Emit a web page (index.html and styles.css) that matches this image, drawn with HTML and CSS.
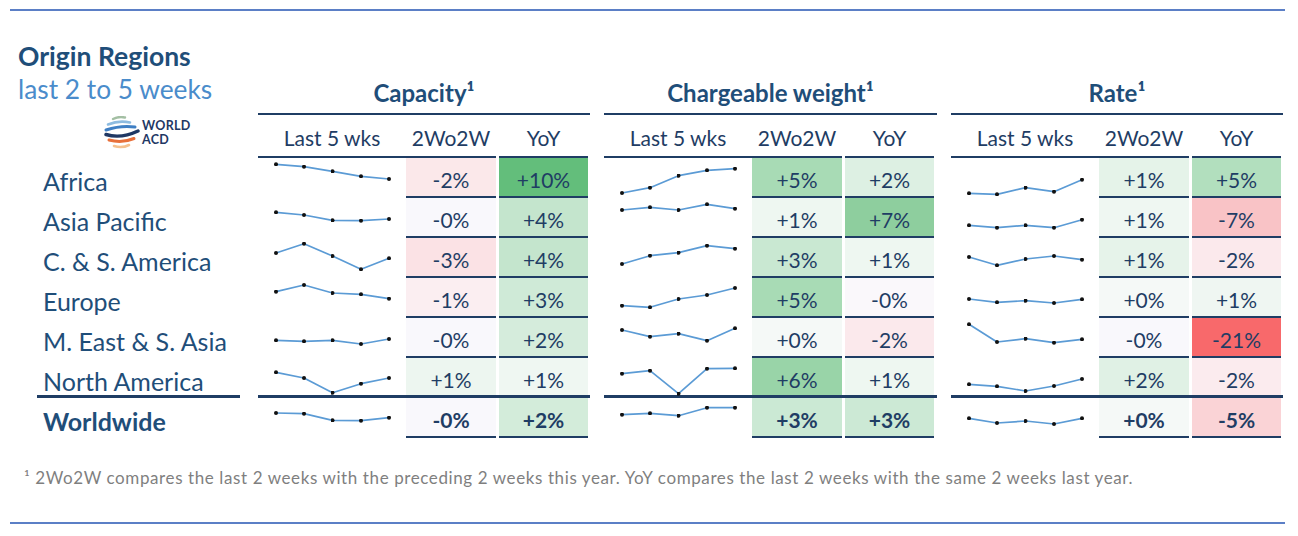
FILE: index.html
```html
<!DOCTYPE html>
<html lang="en">
<head>
<meta charset="utf-8">
<title>Origin Regions</title>
<link rel="stylesheet" href="styles.css">
</head>
<body>
<svg class="defs" width="0" height="0" aria-hidden="true">
  <defs>
    <marker id="dot" viewBox="0 0 4 4" refX="2" refY="2" markerWidth="4" markerHeight="4" markerUnits="userSpaceOnUse">
      <circle cx="2" cy="2" r="2" fill="#111"/>
    </marker>
  </defs>
</svg>
<div class="page">
  <div class="rule"></div>
  <div class="board">
    <div class="side">
      <div class="side-head">
        <div class="title">Origin Regions</div>
        <div class="subtitle">last 2 to 5 weeks</div>
        <div class="logo">
          <svg class="logo-mark" width="36" height="34" viewBox="0 0 36 34">
            <path d="M9,3 Q15,0 21,1.5" stroke="#a3bfa3" stroke-width="2.4" fill="none" stroke-linecap="round"/>
            <path d="M4,8.5 Q15,4 26,6.5" stroke="#8dbbe0" stroke-width="2.6" fill="none" stroke-linecap="round"/>
            <path d="M2,14 Q17,9 31,11" stroke="#3f7fc4" stroke-width="3" fill="none" stroke-linecap="round"/>
            <path d="M2,18.5 Q17,23 34,15" stroke="#1f3864" stroke-width="3.4" fill="none" stroke-linecap="round"/>
            <path d="M5,24 Q18,27.5 30,22.5" stroke="#e8703a" stroke-width="3" fill="none" stroke-linecap="round"/>
            <path d="M10,30 Q18,32.5 25,29" stroke="#f5c18f" stroke-width="2.6" fill="none" stroke-linecap="round"/>
          </svg>
          <div class="logo-text"><span>WORLD</span><span>ACD</span></div>
        </div>
      </div>
      <div class="labels">
        <div class="label">Africa</div>
        <div class="label">Asia Pacific</div>
        <div class="label">C. &amp; S. America</div>
        <div class="label">Europe</div>
        <div class="label">M. East &amp; S. Asia</div>
        <div class="label label-last">North America</div>
        <div class="label label-total">Worldwide</div>
      </div>
    </div>

    <section class="metric">
      <div class="metric-title">Capacity¹</div>
      <div class="colheads"><div class="ch ch-spark">Last 5 wks</div><div class="ch ch-w">2Wo2W</div><div class="ch ch-y">YoY</div></div>
      <div class="row"><div class="spark"><svg class="spk" viewBox="0 0 148 40"><polyline points="18,6.3 46,8.7 74.5,13.3 103,18.3 131,21"/></svg></div><div class="cell" style="background:#fbe8ea">-2%</div><div class="cell cell-y" style="background:#63be7b">+10%</div></div>
      <div class="row"><div class="spark"><svg class="spk" viewBox="0 0 148 40"><polyline points="18,14.3 46,17 74.5,22.3 103,22.7 131,21"/></svg></div><div class="cell" style="background:#f9f8fc">-0%</div><div class="cell cell-y" style="background:#c4e5cd">+4%</div></div>
      <div class="row"><div class="spark"><svg class="spk" viewBox="0 0 148 40"><polyline points="18,15 46,5.7 74.5,18 103,31.3 131,20.3"/></svg></div><div class="cell" style="background:#fbe2e5">-3%</div><div class="cell cell-y" style="background:#c4e5cd">+4%</div></div>
      <div class="row"><div class="spark"><svg class="spk" viewBox="0 0 148 40"><polyline points="18,13.7 46,7 74.5,15 103,16.3 131,20.7"/></svg></div><div class="cell" style="background:#fbeef1">-1%</div><div class="cell cell-y" style="background:#cfead7">+3%</div></div>
      <div class="row"><div class="spark"><svg class="spk" viewBox="0 0 148 40"><polyline points="18,22.3 46,23.3 74.5,22.3 103,26 131,21"/></svg></div><div class="cell" style="background:#f9f8fc">-0%</div><div class="cell cell-y" style="background:#d5ecdc">+2%</div></div>
      <div class="row row-last"><div class="spark"><svg class="spk" viewBox="0 0 148 40"><polyline points="18,14.3 46,20 74.5,34.7 103,25.7 131,20"/></svg></div><div class="cell" style="background:#edf6f0">+1%</div><div class="cell cell-y" style="background:#eff7f2">+1%</div></div>
      <div class="row row-total"><div class="spark"><svg class="spk" viewBox="0 0 148 40"><polyline points="18,15 46,15.7 74.5,22.3 103,22.7 131,19.7"/></svg></div><div class="cell" style="background:#f9f8fc">-0%</div><div class="cell cell-y" style="background:#d3ecda">+2%</div></div>
    </section>

    <section class="metric">
      <div class="metric-title">Chargeable weight¹</div>
      <div class="colheads"><div class="ch ch-spark">Last 5 wks</div><div class="ch ch-w">2Wo2W</div><div class="ch ch-y">YoY</div></div>
      <div class="row"><div class="spark"><svg class="spk" viewBox="0 0 148 40"><polyline points="18,35 46,29.7 74.5,17.7 103,12.3 131,10.7"/></svg></div><div class="cell" style="background:#a8dbb5">+5%</div><div class="cell cell-y" style="background:#ddf0e3">+2%</div></div>
      <div class="row"><div class="spark"><svg class="spk" viewBox="0 0 148 40"><polyline points="18,12 46,9.3 74.5,12 103,6.3 131,10.7"/></svg></div><div class="cell" style="background:#eef7f1">+1%</div><div class="cell cell-y" style="background:#8ece9e">+7%</div></div>
      <div class="row"><div class="spark"><svg class="spk" viewBox="0 0 148 40"><polyline points="18,26 46,17.7 74.5,14.7 103,7.7 131,10.7"/></svg></div><div class="cell" style="background:#c9e8d2">+3%</div><div class="cell cell-y" style="background:#eef7f1">+1%</div></div>
      <div class="row"><div class="spark"><svg class="spk" viewBox="0 0 148 40"><polyline points="18,27.7 46,29.3 74.5,21 103,17 131,10"/></svg></div><div class="cell" style="background:#a8dbb5">+5%</div><div class="cell cell-y" style="background:#faf8fb">-0%</div></div>
      <div class="row"><div class="spark"><svg class="spk" viewBox="0 0 148 40"><polyline points="18,12 46,18.7 74.5,15.7 103,22.7 131,10.3"/></svg></div><div class="cell" style="background:#f5f9f7">+0%</div><div class="cell cell-y" style="background:#fbe9ec">-2%</div></div>
      <div class="row row-last"><div class="spark"><svg class="spk" viewBox="0 0 148 40"><polyline points="18,15.7 46,12.7 74.5,35.7 103,10.7 131,10.3"/></svg></div><div class="cell" style="background:#99d4a8">+6%</div><div class="cell cell-y" style="background:#eef7f1">+1%</div></div>
      <div class="row row-total"><div class="spark"><svg class="spk" viewBox="0 0 148 40"><polyline points="18,16.7 46,15.3 74.5,17.7 103,9.7 131,9.7"/></svg></div><div class="cell" style="background:#cbe9d4">+3%</div><div class="cell cell-y" style="background:#cce9d5">+3%</div></div>
    </section>

    <section class="metric">
      <div class="metric-title">Rate¹</div>
      <div class="colheads"><div class="ch ch-spark">Last 5 wks</div><div class="ch ch-w">2Wo2W</div><div class="ch ch-y">YoY</div></div>
      <div class="row"><div class="spark"><svg class="spk" viewBox="0 0 148 40"><polyline points="18,35.3 46,36.3 74.5,29.7 103,33.7 131,21.7"/></svg></div><div class="cell" style="background:#e5f3e9">+1%</div><div class="cell cell-y" style="background:#b2dfbe">+5%</div></div>
      <div class="row"><div class="spark"><svg class="spk" viewBox="0 0 148 40"><polyline points="18,27.3 46,29.7 74.5,27.3 103,29.7 131,21.7"/></svg></div><div class="cell" style="background:#eff7f2">+1%</div><div class="cell cell-y" style="background:#f9c3c6">-7%</div></div>
      <div class="row"><div class="spark"><svg class="spk" viewBox="0 0 148 40"><polyline points="18,19 46,27.3 74.5,21 103,18 131,21.7"/></svg></div><div class="cell" style="background:#e6f3ea">+1%</div><div class="cell cell-y" style="background:#fbe9ec">-2%</div></div>
      <div class="row"><div class="spark"><svg class="spk" viewBox="0 0 148 40"><polyline points="18,21 46,24.3 74.5,22.7 103,25 131,21.3"/></svg></div><div class="cell" style="background:#f5f9f7">+0%</div><div class="cell cell-y" style="background:#eff6f2">+1%</div></div>
      <div class="row"><div class="spark"><svg class="spk" viewBox="0 0 148 40"><polyline points="18,6.3 46,24 74.5,20.7 103,24.7 131,21.3"/></svg></div><div class="cell" style="background:#f9f8fc">-0%</div><div class="cell cell-y" style="background:#f8696b">-21%</div></div>
      <div class="row row-last"><div class="spark"><svg class="spk" viewBox="0 0 148 40"><polyline points="18,26.3 46,28.3 74.5,33 103,28 131,21"/></svg></div><div class="cell" style="background:#e0f1e5">+2%</div><div class="cell cell-y" style="background:#fbebee">-2%</div></div>
      <div class="row row-total"><div class="spark"><svg class="spk" viewBox="0 0 148 40"><polyline points="18,20.3 46,25 74.5,23 103,26 131,20.3"/></svg></div><div class="cell" style="background:#f5f9f7">+0%</div><div class="cell cell-y" style="background:#fad3d6">-5%</div></div>
    </section>
  </div>
  <p class="note">¹ 2Wo2W compares the last 2 weeks with the preceding 2 weeks this year. YoY compares the last 2 weeks with the same 2 weeks last year.</p>
  <div class="rule"></div>
</div>
</body>
</html>
```
FILE: styles.css
```css
* { box-sizing: border-box; }

html, body {
  margin: 0;
  background: #ffffff;
}

body {
  font-family: Lato, "Open Sans", "Liberation Sans", sans-serif;
  color: #1f3d64;
}

.defs {
  position: absolute;
  width: 0;
  height: 0;
}

.page {
  width: 1298px;
  padding: 9px 13px 0 10px;
}

.rule {
  height: 2px;
  width: 1275px;
  background: #5b7fc6;
}

.board {
  display: grid;
  grid-template-columns: 226px 332px 333px 332px;
  column-gap: 14px;
  padding-left: 8px;
}

/* left column */
.side-head {
  height: 147px;
}

.title {
  padding-top: 29px;
  font-size: 26.5px;
  line-height: 33px;
  font-weight: 700;
  color: #1f4e79;
}

.subtitle {
  font-size: 26.3px;
  line-height: 32px;
  color: #4a8ccb;
}

.logo {
  display: flex;
  align-items: center;
  gap: 2px;
  margin: 11px 0 0 86px;
}

.logo-mark {
  display: block;
}

.logo-text {
  display: flex;
  flex-direction: column;
  font-size: 12.5px;
  line-height: 14px;
  font-weight: 700;
  color: #1f3864;
  letter-spacing: 0.3px;
}

.labels {
  margin-left: 19px;
  width: 203px;
}

.label {
  height: 40px;
  padding: 6px 0 0 6px;
  font-size: 25px;
  line-height: 34px;
  color: #1f4e79;
  white-space: nowrap;
}

.label-last {
  border-bottom: 3px solid #1f3d64;
}

.label-total {
  font-weight: 700;
}

/* metric sections */
.metric {
  display: flex;
  flex-direction: column;
}

.metric-title {
  height: 104px;
  display: flex;
  align-items: flex-end;
  justify-content: center;
  padding-bottom: 5px;
  font-size: 24px;
  line-height: 30px;
  font-weight: 700;
  color: #1f4e79;
  border-bottom: 2px solid #1f3d64;
}

.colheads {
  display: flex;
  height: 43px;
}

.ch {
  border-bottom: 2px solid #1f3d64;
  text-align: center;
  font-size: 21px;
  line-height: 41px;
  padding-top: 2px;
  color: #1f3d64;
}

.ch-spark { width: 148px; }
.ch-w { width: 90px; }
.ch-y { width: 89px; margin-left: 3px; }

.row {
  display: flex;
  height: 40px;
}

.spark {
  width: 148px;
  position: relative;
}

.spk {
  display: block;
  width: 148px;
  height: 40px;
  overflow: visible;
}

.spk polyline {
  fill: none;
  stroke: #5b9bd5;
  stroke-width: 1.7;
  stroke-linejoin: round;
  marker-start: url(#dot);
  marker-mid: url(#dot);
  marker-end: url(#dot);
}

.cell {
  width: 90px;
  border-bottom: 2px solid #1f3d64;
  text-align: center;
  font-size: 21px;
  line-height: 32px;
  padding-top: 6px;
  color: #1f3d64;
}

.cell-y {
  width: 89px;
  margin-left: 3px;
}

.row-last {
  border-bottom: 3px solid #1f3d64;
}

.row-last .cell {
  border-bottom: 0;
}

.row-total .cell {
  font-weight: 700;
}

.note {
  margin: 30px 0 0 14px;
  font-size: 17px;
  line-height: 20px;
  letter-spacing: 0.6px;
  color: #7f7f7f;
  white-space: nowrap;
}

.note + .rule {
  margin-top: 34px;
}
```
